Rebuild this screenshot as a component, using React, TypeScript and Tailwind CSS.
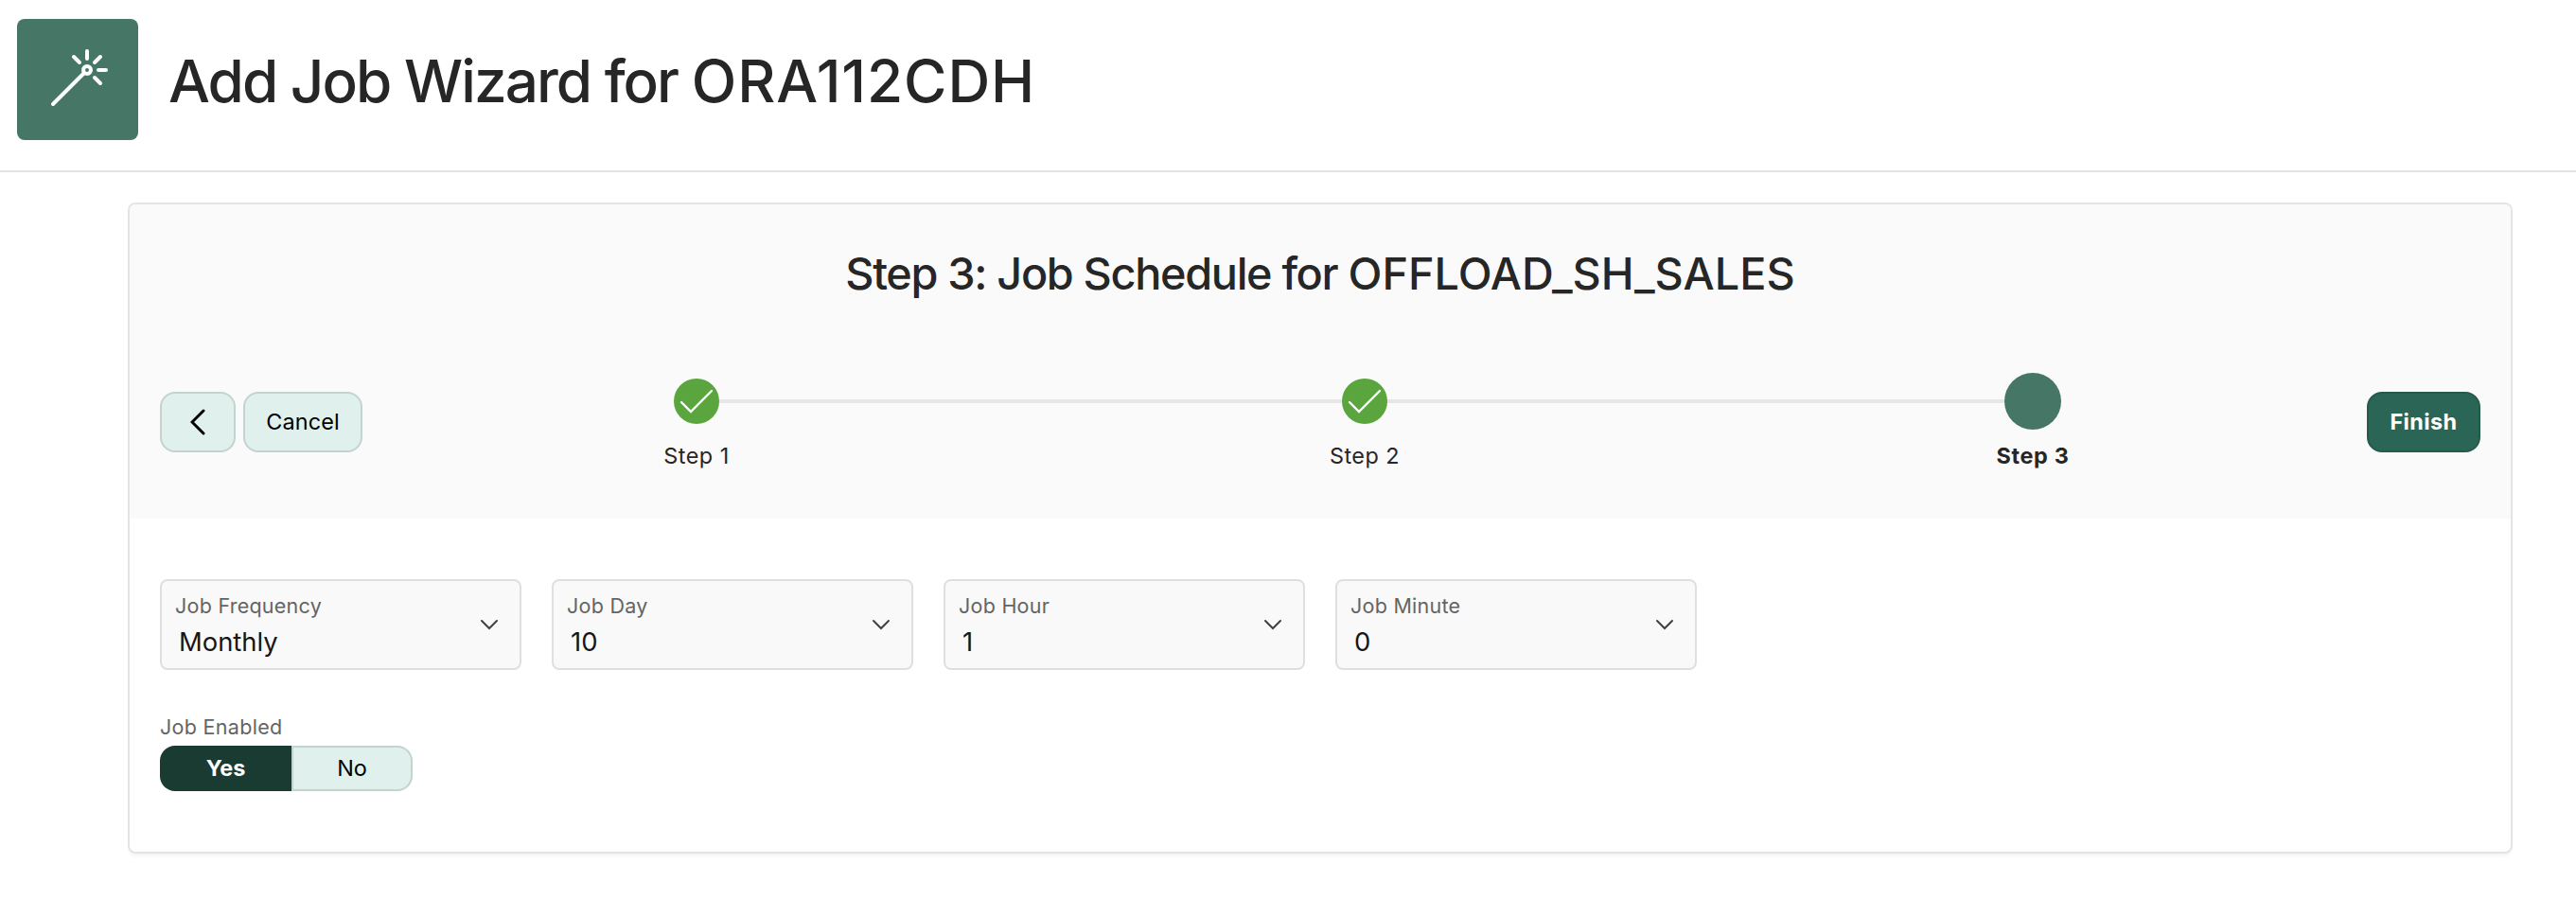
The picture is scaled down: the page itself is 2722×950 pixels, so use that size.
import React from "react";

const fields = [
  { label: "Job Frequency", value: "Monthly" },
  { label: "Job Day", value: "10" },
  { label: "Job Hour", value: "1" },
  { label: "Job Minute", value: "0" },
];

function WandIcon() {
  return (
    <svg className="h-32 w-32" viewBox="0 0 128 128" fill="none" stroke="#fff" strokeWidth="4" strokeLinecap="round">
      <circle cx="74" cy="54" r="4" />
      <path d="M71 57 38 90M74 34v8M86 54h8M82 46l6-6M66 46l-6-6M82 62l6 6" />
    </svg>
  );
}

function DoneStep({ label }: { label: string }) {
  return (
    <li className="flex w-12 flex-col items-center">
      <span className="mt-1.5 h-12 w-12 rounded-full bg-[#5ba53f]">
        <svg className="h-12 w-12" viewBox="0 0 48 48" fill="none" stroke="#fff" strokeWidth="2.4" strokeLinecap="round">
          <path d="M8 25l10 10L40 13" />
        </svg>
      </span>
      <span className="mt-[17px] whitespace-nowrap text-[23.4px] leading-[33px] tracking-[0.5px] text-[#262626]">{label}</span>
    </li>
  );
}

function SelectField({ label, value }: { label: string; value: string }) {
  return (
    <div className="flex h-24 w-[382px] items-start justify-between rounded-lg border-2 border-[#dfdfdf] bg-[#f9f9f9] pt-3 pr-[22px] pl-3.5">
      <div className="flex flex-col">
        <span className="text-[21.5px] leading-7 tracking-[0.25px] text-[#646464]">{label}</span>
        <span className="mt-2 pl-1 text-[27.4px] leading-[33px] text-[#161616]">{value}</span>
      </div>
      <svg className="mt-7 h-3 w-5" viewBox="0 0 20 12" fill="none" stroke="#404040" strokeWidth="2" strokeLinecap="round">
        <path d="M2 2l8 8 8-8" />
      </svg>
    </div>
  );
}

export default function App() {
  return (
    <div className="min-h-[950px] w-full bg-white font-['Inter',sans-serif] text-[#262626]">
      <header className="flex h-[182px] items-start border-b-2 border-[#e4e4e4] pt-5 pl-[18px]">
        <div className="h-32 w-32 rounded-lg bg-[#467665]">
          <WandIcon />
        </div>
        <h1 className="ml-8 pt-[25px] text-[62px] leading-[81px] font-medium">
          <span className="tracking-[-1.95px]">Add Job Wizard for </span>
          <span className="tracking-[0.9px]">ORA112CDH</span>
        </h1>
      </header>

      <main className="pt-8 pr-[67px] pl-[135px]">
        <section className="h-[688px] overflow-hidden rounded-lg border-2 border-[#e4e4e4] bg-white shadow-[0_4px_4px_-2px_rgba(0,0,0,0.06)]">
          <div className="h-[332px] bg-[#fafafa] pt-[43px]">
            <h2 className="text-center text-[46.8px] leading-[60px] font-medium">
              <span className="tracking-[-1.32px]">Step 3: Job Schedule for </span>
              <span>OFFLOAD_SH_SALES</span>
            </h2>
            <div className="flex items-start px-8 pt-[75px]">
              <button className="mt-5 flex h-16 w-[80px] items-center justify-center rounded-2xl border-2 border-[#c3d3cf] bg-[#e0f0ec]">
                <svg className="h-7 w-4" viewBox="0 0 16 28" fill="none" stroke="#000" strokeWidth="3" strokeLinecap="round">
                  <path d="M14 2L2 14l12 12" />
                </svg>
              </button>
              <button className="mt-5 ml-2 h-16 w-[126px] rounded-2xl border-2 border-[#c3d3cf] bg-[#e0f0ec] text-[23.4px] tracking-[0.1px] text-black">Cancel</button>
              <ol className="ml-[329px] flex items-start">
                <DoneStep label="Step 1" />
                <li className="mt-7 h-1 w-[658px] bg-[#e6e6e6]" />
                <DoneStep label="Step 2" />
                <li className="mt-7 h-1 w-[652px] bg-[#e6e6e6]" />
                <li className="flex w-[60px] flex-col items-center">
                  <span className="h-[60px] w-[60px] rounded-full bg-[#467665]" />
                  <span className="mt-[11px] whitespace-nowrap text-[23.4px] leading-[33px] font-bold tracking-[0.7px]">Step 3</span>
                </li>
              </ol>
              <button className="mt-5 ml-auto h-16 w-[120px] rounded-2xl border-2 border-[#265a4a] bg-[#2a6555] text-[23.4px] font-bold tracking-[0.4px] text-white">Finish</button>
            </div>
          </div>

          <div className="px-8 pt-16">
            <div className="flex gap-8">
              {fields.map((f) => (
                <SelectField key={f.label} label={f.label} value={f.value} />
              ))}
            </div>
            <div className="mt-[46px] text-[21.5px] leading-7 tracking-[0.3px] text-[#646464]">Job Enabled</div>
            <div className="mt-1.5 flex h-12 w-[267px]">
              <button className="w-[139px] rounded-l-2xl bg-[#193b31] text-[23.4px] font-bold text-white">Yes</button>
              <button className="w-[128px] rounded-r-2xl border-2 border-[#c3d3cf] bg-[#e0f0ec] text-[23.4px] text-black">No</button>
            </div>
          </div>
        </section>
      </main>
    </div>
  );
}
